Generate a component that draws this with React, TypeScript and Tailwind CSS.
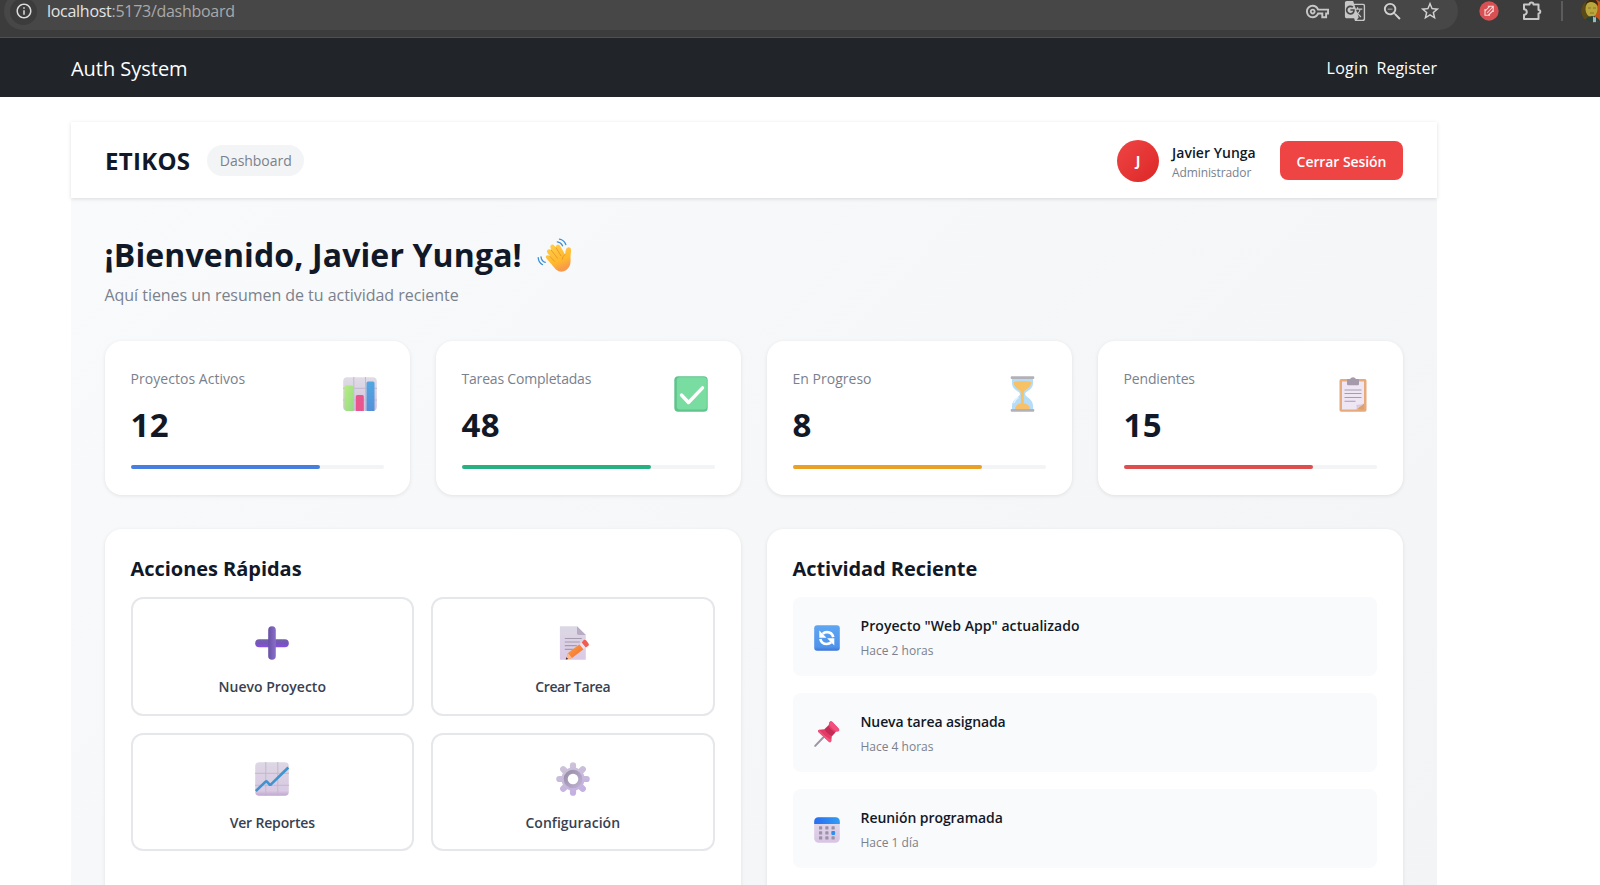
import type { ReactNode } from "react";
import { MdGTranslate, MdInfoOutline, MdOutlineVpnKey, MdStarBorder, MdZoomOut } from "react-icons/md";

const PuzzleIcon = () => (
  <svg width="22" height="22" viewBox="0 0 22 22" fill="none" stroke="#c7c7c7" strokeWidth="2" strokeLinejoin="round">
    <path d="M3 4.500h5.500a2 2 0 0 1 4 0h5v5.500a1.800 1.800 0 0 1 0 3.600V19H3v-4.200a2.700 2.700 0 0 0 0-5.600z" />
  </svg>
);

const BrowserAvatar = () => (
  <svg width="24" height="24" viewBox="0 0 24 24">
    <defs>
      <clipPath id="ba"><circle cx="12" cy="12" r="11.500" /></clipPath>
    </defs>
    <g clipPath="url(#ba)">
      <rect width="24" height="24" fill="#8a3a12" />
      <rect width="8" height="24" fill="#5a4a18" />
      <rect x="14" width="10" height="24" fill="#c4541a" />
      <ellipse cx="10.500" cy="10" rx="6" ry="8" fill="#b9a63c" />
      <path d="M4 7Q5 0 11 0T17 7Q14 3 10 3T4 7z" fill="#3a2a12" />
      <path d="M7 9h3M12 9h3M9 14h4" stroke="#8b7528" strokeWidth="1" />
      <path d="M3 24q1-6 8-7 7 1 9 7z" fill="#27413f" />
      <path d="M12 17.500l2 1 1-1v6h-3z" fill="#9fb9bb" />
    </g>
  </svg>
);

const WaveIcon = () => (
  <svg width="35" height="35" viewBox="0 0 35 35" fill="none" strokeLinecap="round">
    <defs>
      <linearGradient id="wv" x1="0" y1="0" x2="0.400" y2="1">
        <stop offset="0" stopColor="#ffcf4a" /><stop offset="0.700" stopColor="#ffb92e" /><stop offset="1" stopColor="#f79a4b" />
      </linearGradient>
    </defs>
    <path d="M9.500 20.500Q8 18.500 9.800 17.500q1.400-.8 3 .8l1 1L10.500 15Q9.200 12.800 11 11.600q1.700-1 3.200.6L13.600 10q-.8-2.400 1-3.300 1.900-.8 3.200 1.300l1.200 1.800q-.6-2.400 1.300-3.100 1.900-.5 3.100 1.500l4.700 8.200q.2-3.800 1.200-5.600 1.300-2.200 3.400-1.300 1.800.9 1.300 4.200-.7 4.200-.4 8.300.3 6.800-4.500 10.300-5.200 3.300-10.200-.8z" fill="url(#wv)" />
    <path d="M14.200 12.200l6.300 8M19 9.800l5 8M12.900 18.400l4.700 5M28 16.400q-2.500 1.700-2.800 4.900" stroke="#e88f2c" strokeWidth=".8" />
    <path d="M20.300 3.800q3.500.4 5.300 4M22.500 1.200q4.500.8 6.300 5.400" stroke="#3d8fd6" strokeWidth="1.300" />
    <path d="M4 18.800q.6 4.600 4.300 5.600M1.200 19.600q.5 5.300 4.300 7" stroke="#3d8fd6" strokeWidth="1.300" />
  </svg>
);

const BarsIcon = () => (
  <svg width="34" height="34" viewBox="0 0 34 34">
    <defs>
      <linearGradient id="bp" x1="0" y1="0" x2="0" y2="1"><stop offset="0" stopColor="#e0dce6" /><stop offset="1" stopColor="#d0c0dc" /></linearGradient>
      <linearGradient id="bg1" x1="0" y1="0" x2="1" y2="1"><stop offset="0" stopColor="#b5ee7c" /><stop offset="1" stopColor="#96d98b" /></linearGradient>
      <linearGradient id="bb1" x1="0" y1="0" x2="0" y2="1"><stop offset="0" stopColor="#52a7e3" /><stop offset="1" stopColor="#558fd8" /></linearGradient>
    </defs>
    <rect x=".2" y=".2" width="33.600" height="33.600" rx="4" fill="url(#bp)" />
    <path d="M10.800 0v34M22.500 0v34M0 11.300h34M0 23h34" stroke="#c4bacf" strokeWidth="1" />
    <path d="M1.500 10q0-1.500 1.500-1.500h6q1.500 0 1.500 1.500v24H3Q1.500 33 1.500 31z" fill="url(#bg1)" />
    <path d="M12.800 19.500q0-1.500 1.500-1.500h5q1.500 0 1.500 1.500V34h-8z" fill="#e8568d" />
    <path d="M23.500 6Q23.500 4.500 25 4.500h5q1.500 0 1.500 1.500v28h-8z" fill="url(#bb1)" />
  </svg>
);

const CheckIcon = () => (
  <svg width="34" height="36" viewBox="0 0 34 36">
    <rect x=".3" y=".3" width="33.400" height="35.400" rx="4" fill="#60c38c" />
    <rect x="2.800" y="1.300" width="30" height="32.200" rx="3" fill="#79dda1" />
    <path d="M7.500 19l7 7.500L28.500 11.800" fill="none" stroke="#fff" strokeWidth="3.400" strokeLinecap="round" strokeLinejoin="round" />
  </svg>
);

const HourglassIcon = () => (
  <svg width="25" height="36" viewBox="0 0 25 36">
    <path d="M2 2h21v5.500Q23 12 17 15.500q-2 1.300-2 2.500t2 2.800q6 4.200 6 8.700V34H2v-4.500q0-4.500 6-8.700 2-1.600 2-2.800t-2-2.500Q2 12 2 7.500z" fill="#b5dcf8" />
    <path d="M3.500 6q9-2 18 0-.5 5-6.300 8-1.500.9-1.500 3V30h-2.800V17q0-2.100-1.500-3-5.500-3-5.900-8z" fill="#f7c165" />
    <path d="M5 33.500q0-5.500 7.500-6.500 7.500 1 7.500 6.500z" fill="#f8c169" />
    <path d="M4 26.500q1.500-3.500 4-4.700" stroke="#e4f4ff" strokeWidth="1.500" fill="none" strokeLinecap="round" />
    <rect x=".7" y=".3" width="23.600" height="2.700" rx="1" fill="#b3b1b8" />
    <rect x=".7" y="33" width="23.600" height="2.700" rx="1" fill="#b3b1b8" />
  </svg>
);

const ClipboardIcon = () => (
  <svg width="28" height="35" viewBox="0 0 28 35">
    <rect x=".5" y="2" width="27" height="32.800" rx="1.700" fill="#e6aa7c" />
    <path d="M3 4.500h22V27l-5.500 5.500H3z" fill="#efe6f4" />
    <path d="M25 26.500v6h-8z" fill="#dda16f" />
    <path d="M17.500 32q.5-2.800-.3-4.200 4 .4 7.800-1.500z" fill="#d7c8dd" />
    <path d="M8 3q0-1 1-1h2Q12 .2 14 .2T17 2h2q1 0 1 1v4q0 1.200-1.200 1.200H9.200Q8 8.200 8 7z" fill="#a59aab" />
    <path d="M5.500 13h17M5.500 16.500h17M5.500 20.500h17M5.500 24.200h11" stroke="#a79bb2" strokeWidth="1.100" />
  </svg>
);

const PlusIcon = () => (
  <svg width="34" height="34" viewBox="0 0 34 34">
    <defs>
      <linearGradient id="ph" x1="0" y1="0" x2="0" y2="1"><stop offset="0" stopColor="#7462a5" /><stop offset=".5" stopColor="#7555bb" /><stop offset="1" stopColor="#8650e0" /></linearGradient>
      <linearGradient id="pv" x1="0" y1="0" x2="1" y2="0"><stop offset="0" stopColor="#6750a6" /><stop offset="1" stopColor="#8a6fc9" /></linearGradient>
    </defs>
    <rect x=".2" y="13.200" width="33.600" height="8" rx="4" fill="url(#ph)" />
    <rect x="13.200" y=".2" width="7.600" height="33.600" rx="3.800" fill="url(#pv)" />
  </svg>
);

const MemoIcon = () => (
  <svg className="translate-x-[1.500px]" width="30" height="34" viewBox="0 0 30 34">
    <defs>
      <linearGradient id="mp" x1="0" y1="0" x2="0" y2="1"><stop offset="0" stopColor="#dcd8e4" /><stop offset="1" stopColor="#dac9e6" /></linearGradient>
      <linearGradient id="mo" x1="0" y1="0" x2="1" y2="1"><stop offset="0" stopColor="#ffa24a" /><stop offset="1" stopColor="#f06a2a" /></linearGradient>
    </defs>
    <path d="M.3.300H17.500L26.300 9v24.700H.3z" fill="url(#mp)" />
    <path d="M17.500.300L26.300 9h-7q-1.800 0-1.800-1.800z" fill="#b8abc3" />
    <path d="M5.300 12.500h17M5.300 16h15M5.300 19.600h12M5.300 23.300h9" stroke="#a49bae" strokeWidth="1.200" />
    <path d="M8.500 27L20 18.200l4 5L12.500 32l-6 1.500z" fill="url(#mo)" />
    <path d="M8.500 27l4 5-6 1.500z" fill="#ffb98a" />
    <path d="M6.200 33.600l.7-2.400 1.800 1.900z" fill="#3d2b3b" />
    <path d="M20 18.200l2.300-1.800 4 5-2.300 1.800z" fill="#eadff0" />
    <path d="M22.300 16.400l1.500-1.900q1.200-1.600 2.800-.2l2.400 3.100q1.200 1.700-.5 2.700l-2.200 1.300z" fill="#f25b4f" />
  </svg>
);

const TrendIcon = () => (
  <svg width="34" height="34" viewBox="0 0 34 34">
    <defs>
      <linearGradient id="tp" x1="0" y1="0" x2="0" y2="1"><stop offset="0" stopColor="#ddd7e3" /><stop offset=".85" stopColor="#d9c9e3" /><stop offset="1" stopColor="#bea5d0" /></linearGradient>
    </defs>
    <rect x=".2" y=".2" width="33.600" height="33.600" rx="4" fill="url(#tp)" />
    <path d="M10.800 0v34M22.800 0v34M0 11.300h34M0 23.300h34" stroke="#c3b7cd" strokeWidth="1" />
    <path d="M.8 29l9.800-9.400q.7-.7 1.400 0l2.400 2.800q.8.700 1.600 0L33.300 5.500" fill="none" stroke="#3f93cf" strokeWidth="2.600" />
  </svg>
);

const GearIcon = () => (
  <svg width="34" height="34" viewBox="0 0 34 34">
    <defs>
      <linearGradient id="gg" gradientUnits="userSpaceOnUse" x1="10" y1="0" x2="22" y2="34"><stop offset="0" stopColor="#cdc5d8" /><stop offset="1" stopColor="#c3aee2" /></linearGradient>
      <linearGradient id="gr" x1="0" y1="0" x2="1" y2="1"><stop offset="0" stopColor="#9a90a8" /><stop offset="1" stopColor="#bcaed0" /></linearGradient>
    </defs>
    <g stroke="url(#gg)" strokeWidth="6.200" strokeLinecap="round">
      <path d="M17 3.300v27.400M3.300 17h27.400M7.200 7.200l19.600 19.600M26.800 7.200L7.200 26.800" />
    </g>
    <circle cx="17" cy="17" r="11.600" fill="url(#gg)" />
    <circle cx="17" cy="17" r="7.300" fill="#fff" stroke="url(#gr)" strokeWidth="4" />
  </svg>
);

const RefreshIcon = () => (
  <svg width="26" height="26" viewBox="0 0 26 26">
    <defs>
      <linearGradient id="rb" x1="0" y1="0" x2="0" y2="1"><stop offset="0" stopColor="#5ea6f2" /><stop offset=".85" stopColor="#4f93ec" /><stop offset="1" stopColor="#3c74d6" /></linearGradient>
    </defs>
    <rect x=".2" y=".2" width="25.600" height="25.600" rx="3" fill="url(#rb)" />
    <path d="M19.300 12.200Q18 7.200 13 7.200q-2.600 0-4.300 1.700M6.300 14q1.300 5 6.300 5 2.700 0 4.600-1.700" fill="none" stroke="#fff" strokeWidth="2.700" />
    <path d="M5.300 5.600v7.200h7.200zM20.300 20.400v-7.200h-7.200z" fill="#fff" />
  </svg>
);

const PinIcon = () => (
  <svg width="26" height="26" viewBox="0 0 26 26">
    <path d="M1.200 24.900l8-8.400" stroke="#9e95a6" strokeWidth="2" strokeLinecap="round" />
    <path d="M15.500 1.200q1.200-1.600 2.700-.4l6.400 6.800q1.400 1.800-.3 2.600l-2.200.4-4.200 4.500-.7 5.200q-.5 1.700-2.100.6L4.600 11.200q-1.400-1.700.5-2.400l5.200-.6 4.400-4.300z" fill="#e23c66" />
    <path d="M15.500 1.200q1.200-1.600 2.700-.4l6.400 6.800q1.400 1.800-.3 2.600l-1.800.2Q18 8.500 14.900 3z" fill="#f0507b" />
    <path d="M4.600 11.200l10.500 9.700q1.600 1.100 2.100-.6l.2-1.500Q11 16 5.300 8.800 3.200 9.500 4.600 11.200z" fill="#f2527b" />
    <path d="M14.500 5q1.700 4 6.800 6.400L18 15q-4.800-1.800-7.200-6.500z" fill="#c42c57" />
  </svg>
);

const CalendarIcon = () => (
  <svg width="26" height="26" viewBox="0 0 26 26">
    <defs>
      <linearGradient id="cp" x1="0" y1="0" x2="0" y2="1"><stop offset="0" stopColor="#e2dceb" /><stop offset="1" stopColor="#d9c3e4" /></linearGradient>
      <linearGradient id="cb" x1="0" y1="0" x2="1" y2="0"><stop offset="0" stopColor="#2a6cf0" /><stop offset="1" stopColor="#2f9df3" /></linearGradient>
    </defs>
    <rect x=".2" y=".2" width="25.600" height="25.600" rx="4.500" fill="url(#cp)" />
    <path d="M.2 7V4.700Q.2.200 4.700.200h16.600q4.500 0 4.500 4.500V7z" fill="url(#cb)" />
    <g fill="#9b92a8">
      <rect x="5" y="9.300" width="3.200" height="3.200" rx=".6" /><rect x="11.300" y="9.300" width="3.200" height="3.200" rx=".6" /><rect x="17.500" y="9.300" width="3.200" height="3.200" rx=".6" />
      <rect x="5" y="14.300" width="3.200" height="3.200" rx=".6" /><rect x="11.300" y="14.300" width="3.200" height="3.200" rx=".6" />
      <rect x="5" y="19.300" width="3.200" height="3.200" rx=".6" /><rect x="11.300" y="19.300" width="3.200" height="3.200" rx=".6" /><rect x="17.500" y="19.300" width="3.200" height="3.200" rx=".6" />
    </g>
    <rect x="17.300" y="14.100" width="3.800" height="3.800" rx=".8" fill="#2e8fee" />
  </svg>
);

type Stat = { label: string; value: string; icon: ReactNode; bar: string; tracking: string };
const stats: Stat[] = [
  { label: "Proyectos Activos", value: "12", icon: <BarsIcon />, bar: "bg-[#467fe0]", tracking: "tracking-[0.04px]" },
  { label: "Tareas Completadas", value: "48", icon: <CheckIcon />, bar: "bg-[#27b080]", tracking: "tracking-[-0.19px]" },
  { label: "En Progreso", value: "8", icon: <HourglassIcon />, bar: "bg-[#e9a023]", tracking: "tracking-[0.02px]" },
  { label: "Pendientes", value: "15", icon: <ClipboardIcon />, bar: "bg-[#de4e4e]", tracking: "tracking-[-0.16px]" },
];

const actions: { label: string; icon: ReactNode; tracking: string }[] = [
  { label: "Nuevo Proyecto", icon: <PlusIcon />, tracking: "tracking-normal" },
  { label: "Crear Tarea", icon: <MemoIcon />, tracking: "tracking-[-0.36px]" },
  { label: "Ver Reportes", icon: <TrendIcon />, tracking: "tracking-[-0.17px]" },
  { label: "Configuración", icon: <GearIcon />, tracking: "tracking-[0.02px]" },
];

const activities: { title: string; time: string; icon: ReactNode; tracking: string }[] = [
  { title: 'Proyecto "Web App" actualizado', time: "Hace 2 horas", icon: <RefreshIcon />, tracking: "tracking-[0.07px]" },
  { title: "Nueva tarea asignada", time: "Hace 4 horas", icon: <PinIcon />, tracking: "tracking-[-0.1px]" },
  { title: "Reunión programada", time: "Hace 1 día", icon: <CalendarIcon />, tracking: "tracking-[-0.06px]" },
];

function BrowserBar() {
  return (
    <div className="flex h-[38px] items-start overflow-hidden border-b border-[#505050] bg-[#3c3c3c] pl-1">
      <div className="-mt-2 flex h-[38px] w-[1454px] shrink-0 items-center rounded-full bg-[#474747] pr-[17px] pl-[6px]">
        <div className="flex size-[27px] items-center justify-center rounded-full bg-[#3c3c3c]">
          <MdInfoOutline className="size-[18px] text-[#dcdcdc]" />
        </div>
        <div className="ml-[10px] text-[16px] leading-6 tracking-[-0.28px] text-[#a9a9a9]">
          <span className="text-[#e3e3e3]">localhost</span>:5173/dashboard
        </div>
        <div className="ml-auto flex items-center text-[#c7c7c7]">
          <MdOutlineVpnKey className="mr-[15px] size-[23px]" />
          <MdGTranslate className="mr-[15px] size-[22px]" />
          <MdZoomOut className="mr-[15px] size-[23px] text-[#d2d2d2]" />
          <MdStarBorder className="size-[22px] text-[#d2d2d2]" />
        </div>
      </div>
      <div className="flex h-[22px] shrink-0 items-center pl-[21px]">
        <svg width="20" height="20" viewBox="0 0 20 20" fill="none">
          <circle cx="10" cy="10" r="9.700" fill="#d95053" />
          <path d="M6 8v6.300h5M8.200 12l5.500-6M8.800 5.300h5.400V11M6.200 9.800l4.500-4.400M9.500 14l4.600-4.500" stroke="#f3dede" strokeWidth="1.100" />
        </svg>
        <div className="ml-[22px]"><PuzzleIcon /></div>
        <div className="ml-[18px] h-5 w-[2px] bg-[#5c5c5c]" />
        <div className="ml-[18px]"><BrowserAvatar /></div>
      </div>
    </div>
  );
}

export default function App() {
  return (
    <div className="h-[885px] w-[1600px] overflow-hidden bg-white font-['Open_Sans','Noto_Sans',sans-serif]">
      <BrowserBar />
      <nav className="flex h-[59px] items-center justify-between bg-[#212529] pt-px pr-[163px] pl-[71px] text-white">
        <span className="pt-px text-[20px] leading-7 tracking-[-0.03px]">Auth System</span>
        <div className="flex gap-2 text-[16px] leading-6">
          <span className="tracking-[0.3px]">Login</span>
          <span>Register</span>
        </div>
      </nav>

      <main className="mt-[25px] ml-[71px] w-[1366px]">
        <header className="relative flex h-[76px] items-center justify-between bg-white px-[34px] shadow-[0_1px_4px_rgba(0,0,0,0.13)]">
          <div className="flex items-center pt-px">
            <h1 className="pt-px text-[24px] leading-8 font-bold tracking-[0.3px] text-[#111827]">ETIKOS</h1>
            <span className="ml-[17px] flex h-[31px] items-center rounded-full bg-[#f3f4f6] px-[12.500px] text-[14px] tracking-[-0.05px] text-[#7a818d]">Dashboard</span>
          </div>
          <div className="flex items-center pt-[1px]">
            <div className="mr-[13px] flex size-[42px] items-center justify-center rounded-full bg-linear-135 from-[#ef4444] to-[#dc2626] text-[14px] font-bold text-white">J</div>
            <div className="w-[85px] pt-[4px] whitespace-nowrap">
              <div className="text-[14px] leading-5 font-semibold tracking-[0.03px] text-[#111827]">Javier Yunga</div>
              <div className="text-[12px] leading-5 tracking-[-0.1px] text-[#7a818d]">Administrador</div>
            </div>
            <button className="ml-[23px] h-[39px] w-[123px] rounded-lg bg-[#ef4444] pt-[2px] text-[14px] font-semibold tracking-[-0.07px] text-white">Cerrar Sesión</button>
          </div>
        </header>

        <section className="h-[720px] bg-linear-135 from-[#f9fafb] to-[#f3f4f6] pt-[35px] pr-[34.500px] pl-[33.500px]">
          <h2 className="flex h-11 items-center text-[32px] font-bold tracking-[0.13px] whitespace-nowrap text-[#111827]">
            ¡Bienvenido, Javier Yunga!<span className="ml-[15px]"><WaveIcon /></span>
          </h2>
          <p className="mt-[6px] text-[16px] leading-6 tracking-[-0.04px] text-[#7a818d]">Aquí tienes un resumen de tu actividad reciente</p>

          <div className="mt-[34px] grid grid-cols-4 gap-[26px]">
            {stats.map((s) => (
              <div key={s.label} className="h-[154px] rounded-[17px] bg-white px-[26px] pt-[26px] shadow-[0_1px_4px_rgba(0,0,0,0.09)]">
                <div className="flex justify-between">
                  <div>
                    <div className={`text-[14px] leading-6 whitespace-nowrap text-[#7a818d] ${s.tracking}`}>{s.label}</div>
                    <div className="mt-[14px] text-[33px] leading-10 font-bold tracking-[0.5px] text-[#111827]">{s.value}</div>
                  </div>
                  <div className="mt-[9px] mr-[6.500px] flex h-9 w-[34px] items-center justify-center">{s.icon}</div>
                </div>
                <div className="mt-5 h-1 rounded-full bg-[#f3f4f6]">
                  <div className={`h-1 w-3/4 rounded-full ${s.bar}`} />
                </div>
              </div>
            ))}
          </div>

          <div className="mt-[34px] grid grid-cols-2 gap-[26px]">
            <div className="h-[400px] rounded-[17px] bg-white px-[26px] pt-[26px] shadow-[0_1px_4px_rgba(0,0,0,0.09)]">
              <h3 className="text-[20px] leading-7 font-bold tracking-[-0.04px] text-[#111827]">Acciones Rápidas</h3>
              <div className="mt-[14px] grid grid-cols-2 gap-[17px]">
                {actions.map((a) => (
                  <button key={a.label} className="flex h-[118.500px] flex-col items-center rounded-xl border-2 border-[#e5e7eb] bg-white pt-[27px]">
                    <span className="flex h-[34px] items-center">{a.icon}</span>
                    <span className={`mt-4 text-[14px] leading-[22px] font-semibold text-[#374151] ${a.tracking}`}>{a.label}</span>
                  </button>
                ))}
              </div>
            </div>
            <div className="h-[400px] rounded-[17px] bg-white px-[26px] pt-[26px] shadow-[0_1px_4px_rgba(0,0,0,0.09)]">
              <h3 className="text-[20px] leading-7 font-bold tracking-[-0.06px] text-[#111827]">Actividad Reciente</h3>
              <div className="mt-[14px] flex flex-col gap-[17px]">
                {activities.map((a) => (
                  <div key={a.title} className="flex h-[79px] items-center gap-[21px] rounded-lg bg-[#f9fafb] px-[21px] pt-[2px]">
                    {a.icon}
                    <div className="pt-px">
                      <div className={`text-[14px] leading-6 font-semibold text-[#111827] ${a.tracking}`}>{a.title}</div>
                      <div className="text-[12px] leading-[25px] text-[#7a818d]">{a.time}</div>
                    </div>
                  </div>
                ))}
              </div>
            </div>
          </div>
        </section>
      </main>
    </div>
  );
}
